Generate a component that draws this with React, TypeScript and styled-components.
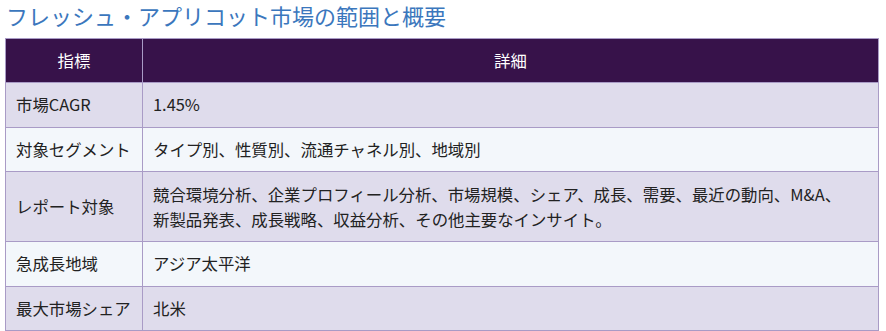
import React from "react";
import styled, { createGlobalStyle } from "styled-components";

const GlobalStyle = createGlobalStyle`
  body {
    margin: 0;
    background: #ffffff;
    font-family: "Noto Sans CJK JP", "Noto Sans", sans-serif;
    color: #222222;
  }
`;

const Section = styled.section`
  padding: 1px 7px 0 5px;
`;

const Title = styled.h2`
  margin: 0 0 8px 1px;
  font-size: 22px;
  line-height: 29px;
  font-weight: 400;
  color: #3b77bd;
`;

const Table = styled.table`
  width: 874px;
  border-collapse: collapse;
  font-size: 16.4px;
  border: 1px solid #a99bc6;
`;

const HeadCell = styled.th<{ $w?: number }>`
  background: #37124a;
  color: #ffffff;
  font-weight: 400;
  text-align: center;
  padding: 10px;
  line-height: 23px;
  border: 1px solid #a99bc6;
  width: ${(p) => (p.$w ? `${p.$w}px` : "auto")};
`;

const Row = styled.tr<{ $alt: boolean }>`
  background: ${(p) => (p.$alt ? "#f3f7fb" : "#dfdcec")};
`;

const Cell = styled.td<{ $multi?: boolean }>`
  padding: 10px;
  line-height: ${(p) => (p.$multi ? "24.5px" : "23.5px")};
  border: 1px solid #a99bc6;
  vertical-align: middle;
`;

const Line = styled.span`
  display: block;
`;

const rows: [string, string[]][] = [
  ["市場CAGR", ["1.45%"]],
  ["対象セグメント", ["タイプ別、性質別、流通チャネル別、地域別"]],
  [
    "レポート対象",
    [
      "競合環境分析、企業プロフィール分析、市場規模、シェア、成長、需要、最近の動向、M&A、",
      "新製品発表、成長戦略、収益分析、その他主要なインサイト。",
    ],
  ],
  ["急成長地域", ["アジア太平洋"]],
  ["最大市場シェア", ["北米"]],
];

export default function App() {
  return (
    <Section>
      <GlobalStyle />
      <Title>フレッシュ・アプリコット市場の範囲と概要</Title>
      <Table>
        <thead>
          <tr>
            <HeadCell $w={116}>指標</HeadCell>
            <HeadCell>詳細</HeadCell>
          </tr>
        </thead>
        <tbody>
          {rows.map(([k, v], i) => (
            <Row key={k} $alt={i % 2 === 1}>
              <Cell>{k}</Cell>
              <Cell $multi={v.length > 1}>
                {v.map((t) => (
                  <Line key={t}>{t}</Line>
                ))}
              </Cell>
            </Row>
          ))}
        </tbody>
      </Table>
    </Section>
  );
}
